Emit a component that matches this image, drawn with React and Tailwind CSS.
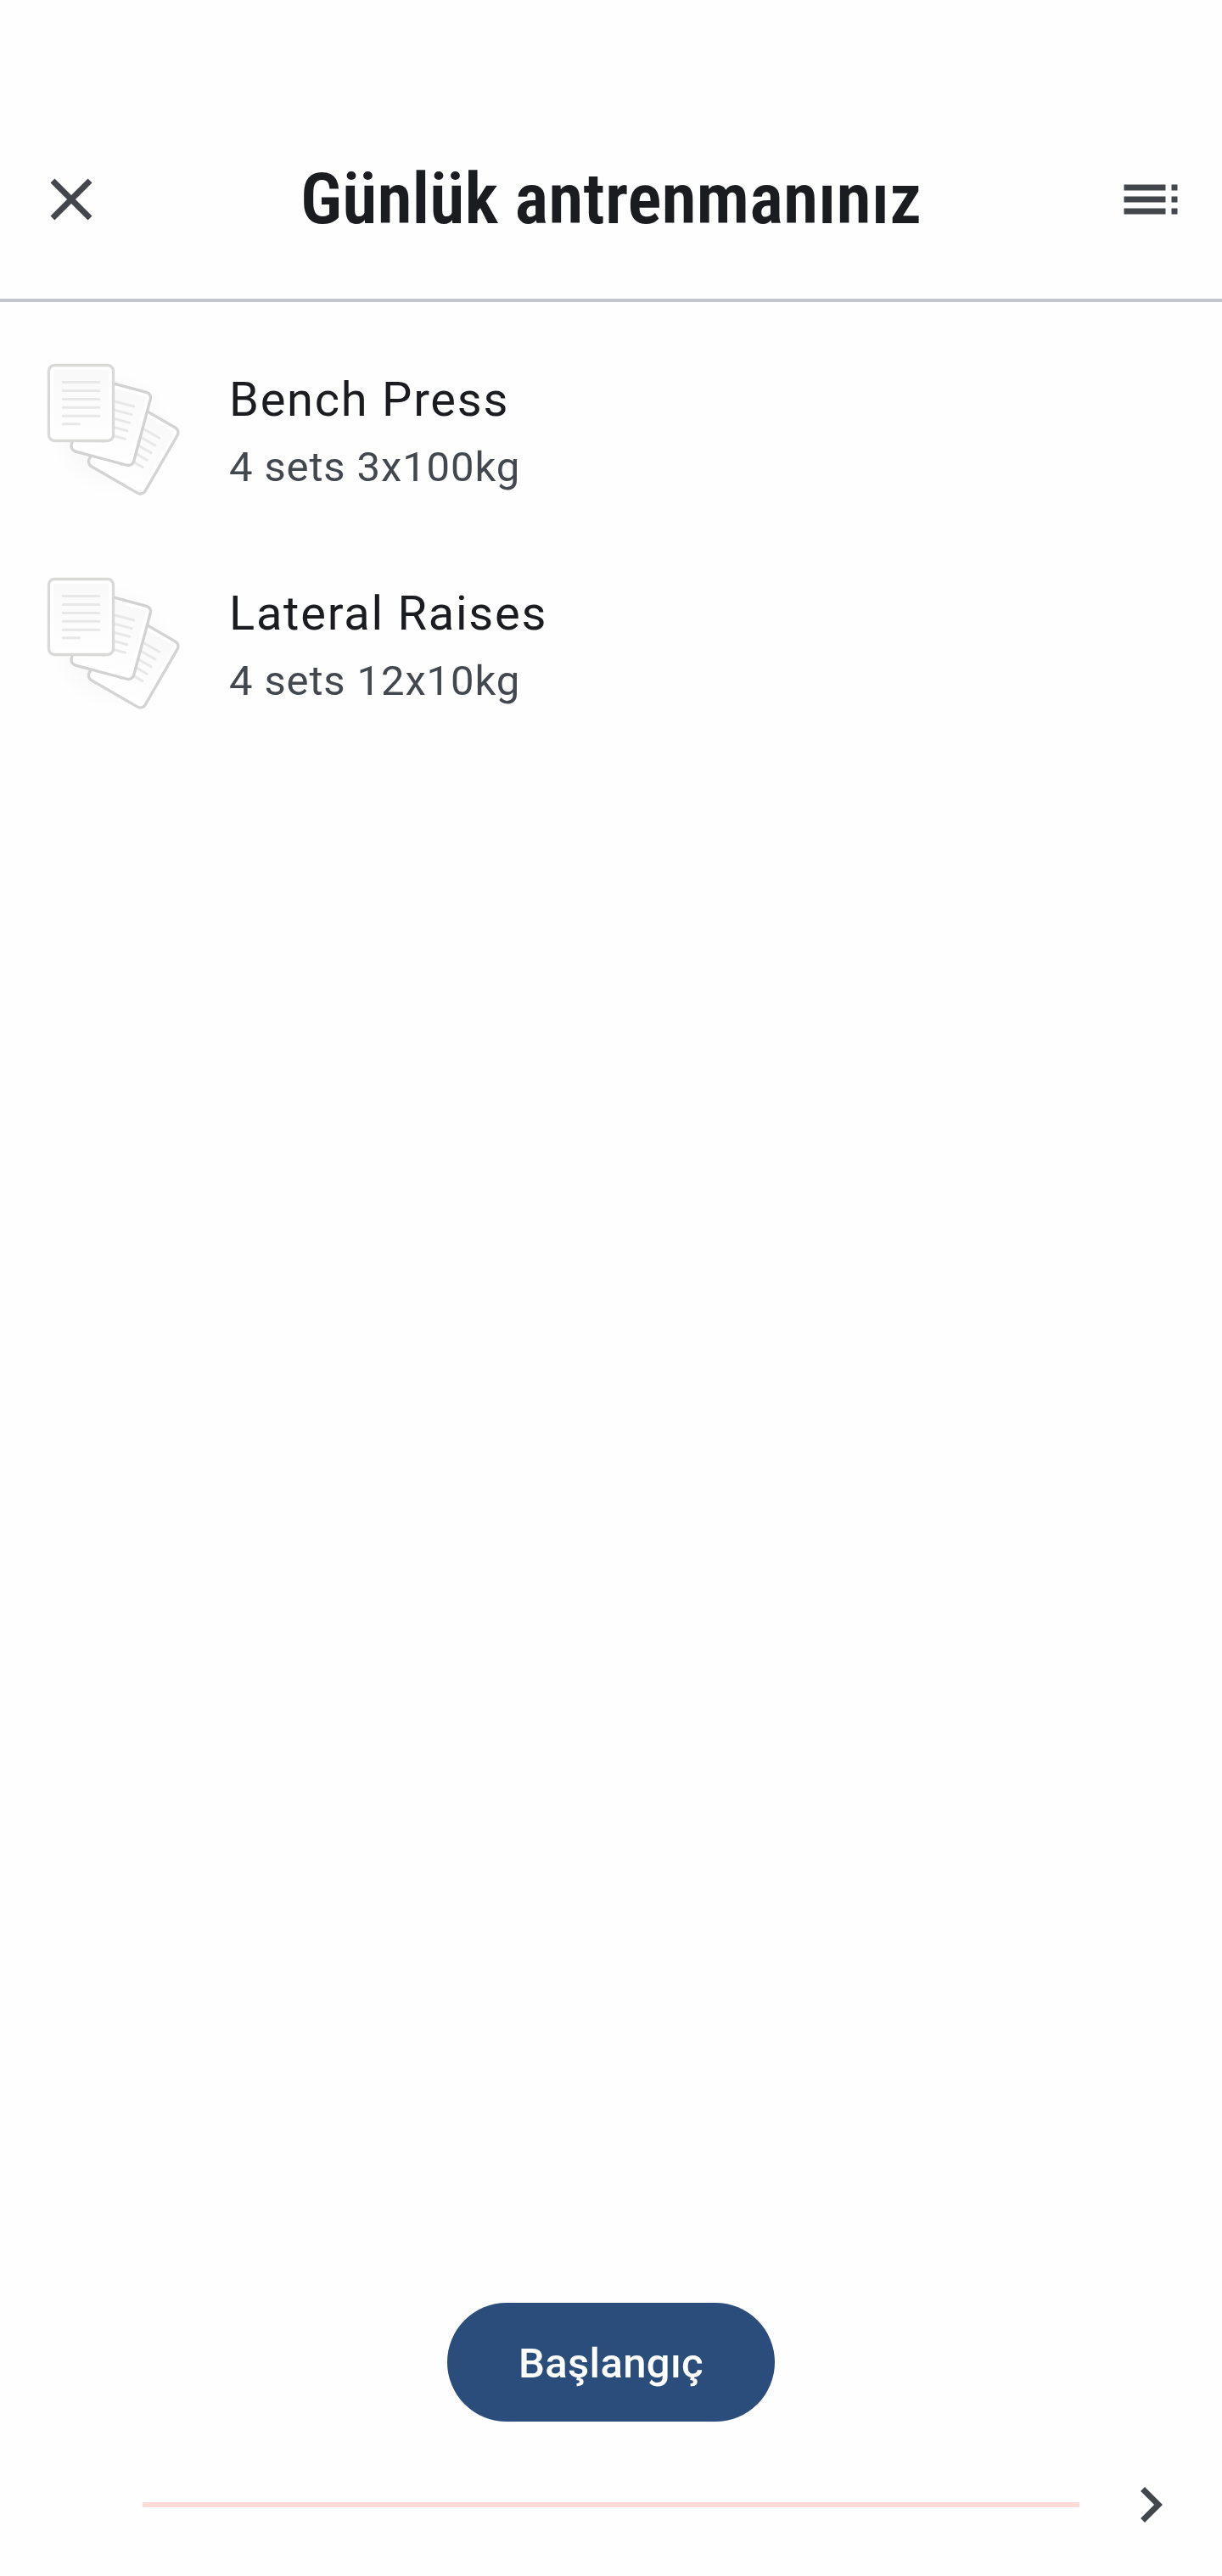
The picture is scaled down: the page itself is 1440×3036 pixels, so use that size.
import { cva } from "class-variance-authority";

const iconClass = cva("h-[84px] w-[84px] shrink-0 fill-current text-[#43474b]");

const exercises = [
  { id: 1, name: "Bench Press", detail: "4 sets 3x100kg" },
  { id: 2, name: "Lateral Raises", detail: "4 sets 12x10kg" },
];

function CloseIcon() {
  return (
    <svg viewBox="0 0 24 24" className={iconClass()}>
      <path d="M19 6.41L17.59 5 12 10.59 6.41 5 5 6.41 10.59 12 5 17.59 6.41 19 12 13.41 17.59 19 19 17.59 13.41 12z" />
    </svg>
  );
}

function TocIcon() {
  return (
    <svg viewBox="0 0 24 24" className={iconClass()}>
      <path d="M3 9h14V7H3v2zm0 4h14v-2H3v2zm0 4h14v-2H3v2zm16 0h2v-2h-2v2zm0-10v2h2V7h-2zm0 6h2v-2h-2v2z" />
    </svg>
  );
}

function ChevronRightIcon() {
  return (
    <svg viewBox="0 0 24 24" className={iconClass()}>
      <path d="M10 6L8.59 7.41 13.17 12l-4.58 4.59L10 18l6-6z" />
    </svg>
  );
}

// One sheet of paper, drawn leftwards from its top right corner.
function Sheet({ transform, stroke, strokeWidth }) {
  return (
    <g transform={transform}>
      <rect
        x="-228"
        y="0"
        width="228"
        height="267"
        rx="20"
        fill="#fff"
        stroke={stroke}
        strokeWidth={strokeWidth}
      />
      <rect x="-212" y="16" width="196" height="235" rx="4" fill="url(#paper)" />
      <path
        d="M-178 60H-50M-178 90H-50M-178 120H-50M-178 149.500H-50M-178 179H-50M-178 208H-120"
        stroke="#e8e8e8"
        strokeWidth="9"
        strokeLinecap="round"
      />
    </g>
  );
}

function PagesPlaceholder() {
  return (
    <svg viewBox="0 0 570 570" fill="none" className="h-[190px] w-[190px] shrink-0">
      <defs>
        <linearGradient id="paper" x1="0" y1="0" x2="0" y2="1">
          <stop offset="0" stopColor="#f9f9f9" />
          <stop offset="1" stopColor="#fefefe" />
        </linearGradient>
        <radialGradient id="shade">
          <stop offset="0.6" stopColor="#f9f9f9" />
          <stop offset="1" stopColor="#f9f9f9" stopOpacity="0" />
        </radialGradient>
      </defs>
      <circle cx="275" cy="300" r="220" fill="url(#shade)" />
      <Sheet transform="translate(517 292) rotate(30)" stroke="#d4d4d4" strokeWidth="10" />
      <Sheet transform="translate(417 162) rotate(15)" stroke="#d2d2d2" strokeWidth="10" />
      <Sheet transform="translate(280.500 61.500)" stroke="#d9d9d8" strokeWidth="10" />
    </svg>
  );
}

function ExerciseRow({ exercise }) {
  return (
    <li className="flex h-[252px] items-center gap-10 pl-10">
      <PagesPlaceholder />
      <div className="pt-2">
        <p className="text-[56px] leading-[84px] tracking-[1.75px] text-[#1a1c20]">
          {exercise.name}
        </p>
        <p className="text-[49px] leading-[76px] tracking-[0.875px] text-[#43474e]">
          {exercise.detail}
        </p>
      </div>
    </li>
  );
}

export default function App() {
  return (
    <div className="flex h-[3036px] w-[1440px] flex-col bg-[#fefefe] font-['Roboto',sans-serif]">
      <header className="flex h-[356px] items-center justify-between border-b-4 border-[#c3c6cf] px-[42px] pt-[118px]">
        <button type="button" aria-label="Kapat">
          <CloseIcon />
        </button>
        <h1 className="font-['Roboto_Condensed','Roboto',sans-serif] text-[84px] leading-[112px] font-semibold text-[#1a1c20] [font-stretch:75%]">
          Günlük antrenmanınız
        </h1>
        <button type="button" aria-label="Liste">
          <TocIcon />
        </button>
      </header>

      <ul className="flex-1 pt-[23px]">
        {exercises.map((exercise) => (
          <ExerciseRow key={exercise.id} exercise={exercise} />
        ))}
      </ul>

      <div className="flex justify-center">
        <button
          type="button"
          className="h-[140px] w-[386px] rounded-full bg-[#2a4d7c] pt-1 text-[49px] font-medium tracking-[0.35px] text-white"
        >
          Başlangıç
        </button>
      </div>

      <footer className="mt-14 mb-[42px] flex h-[84px] items-center pr-[42px] pl-[168px]">
        <div className="h-1.5 flex-1 bg-[#ffdad8]" />
        <button type="button" aria-label="İleri" className="ml-[42px]">
          <ChevronRightIcon />
        </button>
      </footer>
    </div>
  );
}
